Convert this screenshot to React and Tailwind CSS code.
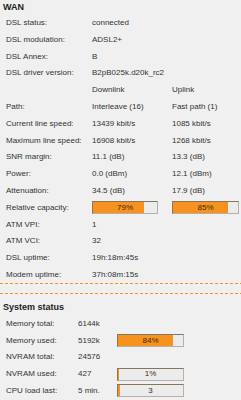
import React from 'react';

const wanRows = [
  { label: 'DSL status:', a: 'connected' },
  { label: 'DSL modulation:', a: 'ADSL2+' },
  { label: 'DSL Annex:', a: 'B' },
  { label: 'DSL driver version:', a: 'B2pB025k.d20k_rc2' },
  { label: '', a: 'Downlink', b: 'Uplink' },
  { label: 'Path:', a: 'Interleave (16)', b: 'Fast path (1)' },
  { label: 'Current line speed:', a: '13439 kbit/s', b: '1085 kbit/s' },
  { label: 'Maximum line speed:', a: '16908 kbit/s', b: '1268 kbit/s' },
  { label: 'SNR margin:', a: '11.1 (dB)', b: '13.3 (dB)' },
  { label: 'Power:', a: '0.0 (dBm)', b: '12.1 (dBm)' },
  { label: 'Attenuation:', a: '34.5 (dB)', b: '17.9 (dB)' },
  { label: 'Relative capacity:', barA: 79, barB: 85 },
  { label: 'ATM VPI:', a: '1' },
  { label: 'ATM VCI:', a: '32' },
  { label: 'DSL uptime:', a: '19h:18m:45s' },
  { label: 'Modem uptime:', a: '37h:08m:15s' },
];

const sysRows = [
  { label: 'Memory total:', value: '6144k' },
  { label: 'Memory used:', value: '5192k', pct: 84, text: '84%' },
  { label: 'NVRAM total:', value: '24576' },
  { label: 'NVRAM used:', value: '427', pct: 1, text: '1%' },
  { label: 'CPU load last:', value: '5 min.', pct: 3, text: '3' },
];

const Bar = ({ pct, text, className }) => (
  <div
    className={`relative h-[13px] border border-t-[#857563] border-l-[#857563] border-r-[#b8b0a8] border-b-[#b8b0a8] bg-[#ececec] ${className}`}
  >
    <div className="absolute left-0 top-0 bottom-0 bg-[#f7921e]" style={{ width: `${pct}%` }} />
    <div className="absolute inset-0 flex items-center justify-center text-[8px] leading-none text-[#3a2a18]">
      {text}
    </div>
  </div>
);

const SectionTitle = ({ children, className }) => (
  <div className={`pl-[3px] text-[9px] font-bold leading-[14px] text-[#222] ${className}`}>{children}</div>
);

// orange dotted rule between the sections
const Dashes = () => (
  <div className="h-px bg-[repeating-linear-gradient(90deg,#f7941d_0_3px,transparent_3px_5px)]" />
);

const App = () => {
  return (
    <div className="h-[400px] w-[241px] overflow-hidden bg-[#f0f0f0] font-['Liberation_Sans',Arial,sans-serif] text-[8px] text-[#333]">
      <SectionTitle className="h-[14.6px]">WAN</SectionTitle>

      <div>
        {wanRows.map((row, i) => (
          <div key={i} className="flex h-[16.8px] items-center">
            <div className="w-[92px] shrink-0 pl-[6px]">{row.label}</div>
            {row.barA !== undefined ? (
              <>
                <Bar pct={row.barA} text={`${row.barA}%`} className="w-[66px]" />
                <div className="w-[14px]" />
                <Bar pct={row.barB} text={`${row.barB}%`} className="w-[67px]" />
              </>
            ) : (
              <>
                <div className="w-[80px] shrink-0 whitespace-nowrap">{row.a}</div>
                <div className="whitespace-nowrap">{row.b}</div>
              </>
            )}
          </div>
        ))}
      </div>

      <div className="flex flex-col gap-[9px]">
        <Dashes />
        <Dashes />
      </div>

      <SectionTitle className="mt-[6px] h-[15px]">System status</SectionTitle>

      <div>
        {sysRows.map((row, i) => (
          <div key={i} className="flex h-[16.8px] items-center">
            <div className="w-[78px] shrink-0 pl-[6px]">{row.label}</div>
            <div className="w-[39px] shrink-0 whitespace-nowrap">{row.value}</div>
            {row.pct !== undefined && <Bar pct={row.pct} text={row.text} className="w-[67px]" />}
          </div>
        ))}
      </div>
    </div>
  );
};

export default App;
